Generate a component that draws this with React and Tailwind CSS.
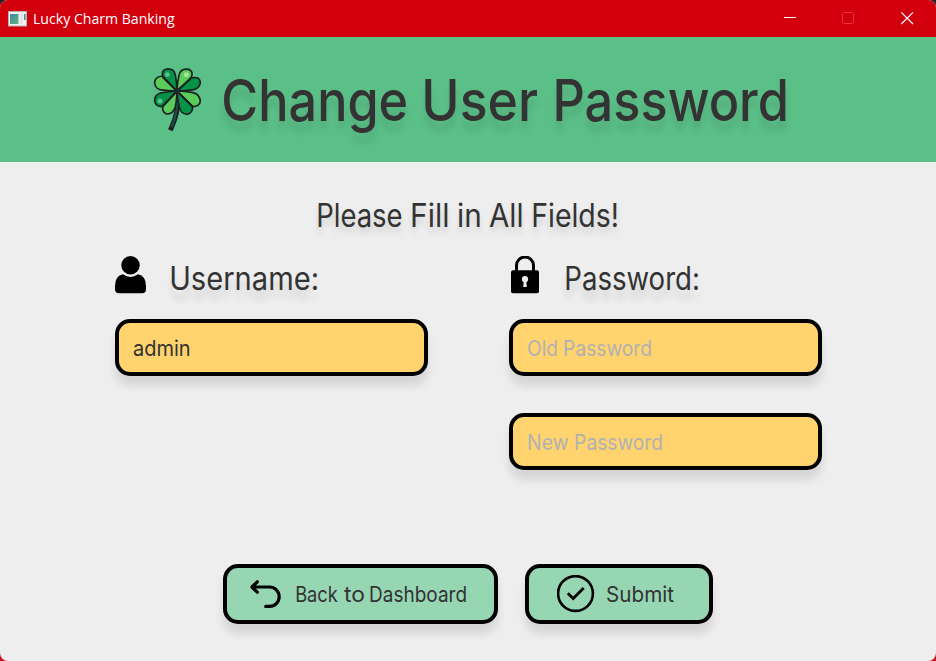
import { useLayoutEffect, useRef, useState } from "react";

// A word drawn so that its visible glyphs span exactly `width` pixels.
function Word({ children, width }) {
  const ref = useRef(null);
  const [fit, setFit] = useState({ scale: 1, shift: 0 });
  useLayoutEffect(() => {
    const cs = getComputedStyle(ref.current);
    const ctx = document.createElement("canvas").getContext("2d");
    ctx.font = `${cs.fontWeight} ${cs.fontSize} ${cs.fontFamily}`;
    const m = ctx.measureText(children);
    const scale = width / (m.actualBoundingBoxLeft + m.actualBoundingBoxRight);
    setFit({ scale, shift: m.actualBoundingBoxLeft * scale });
  }, [children, width]);
  return (
    <span className="block shrink-0 whitespace-nowrap" style={{ width }}>
      <span
        ref={ref}
        className="inline-block origin-left"
        style={{ transform: `translateX(${fit.shift}px) scaleX(${fit.scale})` }}
      >
        {children}
      </span>
    </span>
  );
}

function Clover() {
  return (
    <svg width="48" height="64" viewBox="39 38 144 192" className="shrink-0">
      <path d="M114 116 Q118 165 94 218" fill="none" stroke="#1d2124" strokeWidth="15" strokeLinecap="square" />
      <path d="M113 120 Q114 170 95 215" fill="none" stroke="#1c4f45" strokeWidth="6" />
      <g stroke="#1d2124" strokeWidth="5" strokeLinejoin="round">
        <path d="M111 107 L68 62 Q44 63 44 83 Q46 99 60 103 Q80 107 111 107Z" fill="#5bcb59" />
        <path d="M111 107 L68 62 Q64 44 80 41 Q101 39 106 58 Q110 78 111 107Z" fill="#039347" />
        <path d="M111 107 L153 68 Q162 50 146 42 Q121 38 117 60 Q112 80 111 107Z" fill="#5bcb59" />
        <path d="M111 107 L153 68 Q179 62 181 81 Q179 99 161 103 Q140 107 111 107Z" fill="#039347" />
        <path d="M111 107 L68 154 Q46 154 44 137 Q43 119 61 113 Q84 108 111 107Z" fill="#039347" />
        <path d="M111 107 L68 154 Q66 171 80 176 Q100 176 106 154 Q110 137 111 107Z" fill="#5bcb59" />
        <path d="M111 107 L158 154 Q180 154 181 136 Q178 117 159 112 Q136 107 111 107Z" fill="#5bcb59" />
        <path d="M111 107 L158 154 Q158 172 142 177 Q121 175 118 155 Q112 132 111 107Z" fill="#039347" />
      </g>
      <path d="M68 65 L111 108 L153 68 M69 151 L111 108 L157 153" fill="none" stroke="#1d2124" strokeWidth="6" />
      <circle cx="112" cy="108" r="8" fill="#1d2b28" />
      <circle cx="82" cy="58" r="7" fill="#5fc08a" />
      <circle cx="139" cy="58" r="7.5" fill="#a5e59b" />
      <circle cx="60" cy="137" r="7.5" fill="#5fc08a" />
    </svg>
  );
}

function TitleBar() {
  return (
    <div className="flex h-[37px] shrink-0 items-center bg-[#d2000d] pl-2 text-white">
      <svg width="19" height="16" viewBox="0 0 19 16" className="mr-[7px] shrink-0">
        <defs>
          <linearGradient id="pane" x1="0" y1="0" x2="1" y2="1">
            <stop offset="0" stopColor="#4483a4" />
            <stop offset="1" stopColor="#62b878" />
          </linearGradient>
        </defs>
        <rect x="0.5" y="0.5" width="18" height="14.5" fill="#f2f2f2" stroke="#b9b3ae" />
        <rect x="2" y="3" width="8.5" height="10" fill="url(#pane)" />
        <rect x="12" y="3" width="3" height="10" fill="#e3e4ea" />
        <rect x="16" y="3" width="1.6" height="6" fill="#4a8f9c" />
      </svg>
      <div className="font-['Open_Sans','Noto_Sans',sans-serif] text-[14px] leading-5">
        <Word width={141}>Lucky Charm Banking</Word>
      </div>
      <svg width="134" height="16" viewBox="0 0 134 16" fill="none" className="mr-[20px] mb-px ml-auto shrink-0">
        <path d="M2 7.5H14" stroke="#fff" />
        <rect x="60.5" y="2.5" width="11" height="11" rx="1" stroke="#e0323d" />
        <path d="M119.3 2.3L131 14M131 2.3L119.3 14" stroke="#fff" strokeWidth="1.2" />
      </svg>
    </div>
  );
}

function Field({ children, placeholder }) {
  return (
    <div
      className={`flex h-[57px] w-[313px] items-center rounded-[15px] border-4 border-black bg-[#ffd36e] pt-[2px] text-[21.5px] shadow-[0_10px_8px_rgba(0,0,0,0.1)] ${
        placeholder ? "gap-[7px] pl-[15px] text-[#b2b2b2]" : "pl-[14px] text-[#333]"
      }`}
    >
      {children}
    </div>
  );
}

function Label({ icon, children }) {
  return (
    <div className="flex h-[38px] items-center text-[32px]">
      {icon}
      <div className="pt-[8px] text-shadow-[0_10px_7px_rgba(0,0,0,0.11)]">{children}</div>
    </div>
  );
}

const button =
  "flex h-[60px] items-center rounded-[15px] border-4 border-black bg-[#97d6b3] text-[21.5px] shadow-[0_10px_8px_rgba(0,0,0,0.1)]";

export default function App() {
  return (
    <div className="h-[661px] w-[936px] bg-linear-to-b from-[#222] from-50% to-[#cf1020] to-50%">
      <div className="flex h-full w-full flex-col overflow-hidden rounded-lg bg-[#eee] font-['Inter','Liberation_Sans',sans-serif] leading-none text-[#333]">
        <TitleBar />
        <header className="flex h-[125px] shrink-0 items-center bg-[#5bc088] pl-[153px]">
          <Clover />
          <h1 className="flex gap-[17px] pt-[2px] pl-[23px] text-[57px] leading-[76px] font-medium text-shadow-[0_10px_8px_rgba(0,0,0,0.11)]">
            <Word width={182}>Change</Word>
            <span className="pl-[2px]">
              <Word width={112}>User</Word>
            </span>
            <span className="pl-[2px]">
              <Word width={230}>Password</Word>
            </span>
          </h1>
        </header>
        <main className="flex flex-col">
          <h2 className="mt-[38px] flex h-8 items-center gap-[9px] pl-[318px] text-[32px] text-shadow-[0_6px_7px_rgba(0,0,0,0.13)]">
            <Word width={84}>Please</Word>
            <span className="pl-px">
              <Word width={36}>Fill</Word>
            </span>
            <span className="pl-px">
              <Word width={22}>in</Word>
            </span>
            <Word width={33}>All</Word>
            <span className="pl-[2px]">
              <Word width={84}>Fields!</Word>
            </span>
          </h2>
          <div className="mt-6 flex gap-[81px] pl-[115px]">
            <section className="flex flex-col gap-[25px]">
              <Label
                icon={
                  <svg width="31" height="38" viewBox="0 0 31 38" className="mr-[25px] shrink-0">
                    <circle cx="15.5" cy="9.2" r="9.2" />
                    <path d="M8 18.3Q15.5 23.5 23 18.3Q31 20 31 30V33Q31 37.3 27 37.3H4Q0 37.3 0 33V30Q0 20 8 18.3Z" />
                  </svg>
                }
              >
                <Word width={146}>Username:</Word>
              </Label>
              <Field>
                <Word width={57}>admin</Word>
              </Field>
            </section>
            <section className="flex flex-col">
              <Label
                icon={
                  <svg width="28" height="38" viewBox="0 0 28 38" className="mr-[27px] ml-[2px] shrink-0">
                    <path d="M5.5 16V9.5A8.5 8.5 0 0 1 22.5 9.5V16" fill="none" stroke="#000" strokeWidth="3" />
                    <rect y="14.3" width="28" height="23" rx="2" />
                    <circle cx="14" cy="23.2" r="3.1" fill="#eee" />
                    <path d="M13 23H15L15.8 31H12.2Z" fill="#eee" />
                  </svg>
                }
              >
                <Word width={132}>Password:</Word>
              </Label>
              <div className="mt-[25px] flex flex-col gap-[37px]">
                <Field placeholder>
                  <Word width={29}>Old</Word>
                  <Word width={87}>Password</Word>
                </Field>
                <Field placeholder>
                  <Word width={40}>New</Word>
                  <Word width={87}>Password</Word>
                </Field>
              </div>
            </section>
          </div>
          <div className="mt-[94px] flex gap-[27px] pl-[223px]">
            <div className={`${button} w-[275px] pl-[23px]`}>
              <svg width="32" height="30" viewBox="0 0 32 30" fill="none" stroke="#000" strokeWidth="3.2" strokeLinecap="round" strokeLinejoin="round" className="mr-[14px] shrink-0">
                <path d="M7.3 2.8L2 8L7.3 13.2" />
                <path d="M2.5 8H19.5A9.7 9.7 0 0 1 19.5 27.4H15.7" />
              </svg>
              <div className="flex gap-[6px] pt-[2px]">
                <Word width={42}>Back</Word>
                <Word width={20}>to</Word>
                <Word width={96}>Dashboard</Word>
              </div>
            </div>
            <div className={`${button} w-[188px] pl-[28px]`}>
              <svg width="38" height="38" viewBox="0 0 38 38" fill="none" stroke="#000" strokeWidth="2.6" className="mr-[12px] shrink-0">
                <circle cx="18.5" cy="18.5" r="17.4" />
                <path d="M10.8 18.2L16.2 23.5L26.7 12.9" strokeWidth="2.8" />
              </svg>
              <div className="pt-[2px]">
                <Word width={67}>Submit</Word>
              </div>
            </div>
          </div>
        </main>
      </div>
    </div>
  );
}
